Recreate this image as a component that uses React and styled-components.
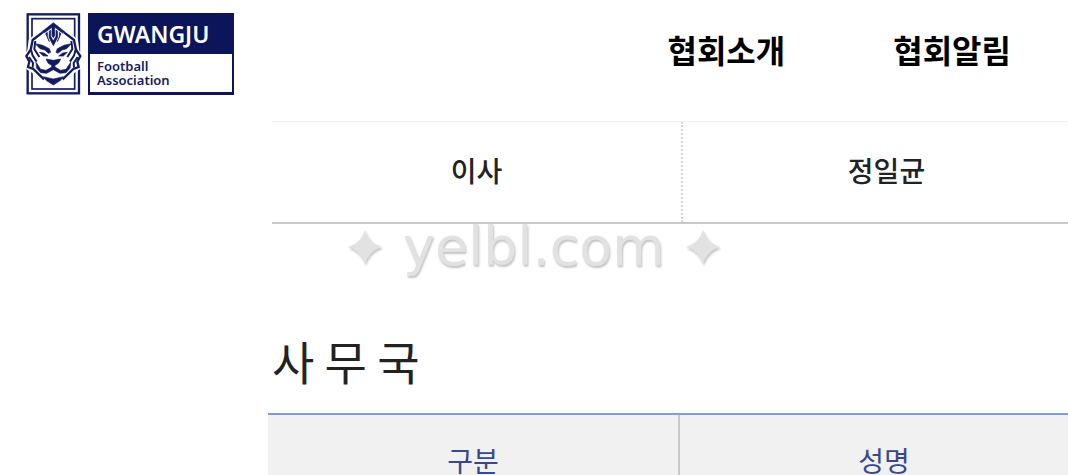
import React from 'react';
import styled, { createGlobalStyle } from 'styled-components';

const menus = ['협회소개', '협회알림'];

function LionCrest() {
  return (
    <svg width='57' height='82' viewBox='15 24 171 246' aria-hidden='true'>
      <rect x='23' y='28' width='154' height='237' fill='#fff' stroke='#121a62' strokeWidth='7' />
      <rect x='36' y='41' width='128' height='211' fill='none' stroke='#121a62' strokeWidth='5' />
      <path
        d='M100 46 L126 66 L154 86 L174 104 L178 136 L188 154 L184 190 L160 206 L134 226 L100 248 L66 226 L40 206 L16 190 L12 154 L22 136 L26 104 L46 86 L74 66Z'
        fill='#fff'
      />
      <g fill='#121a62' stroke='#121a62' strokeWidth='2'>
        <path d='M100 53 L134 80 L128 84 L104 67 L104 92 L100 98 L96 92 L96 67 L72 84 L66 80Z' />
        <path d='M88 78 L92 76 L92 94 L100 108 L108 94 L108 76 L112 78 L113 97 L100 122 L87 97Z' />
        <path d='M77 86 L82 82 L82 96 L88 110Z M123 86 L118 82 L118 96 L112 110Z' />
        <path d='M46 116 L68 121 L88 131 L92 142 L86 145 L74 135 L60 131Z M154 116 L132 121 L112 131 L108 142 L114 145 L126 135 L140 131Z' />
        <path d='M58 142 L72 144 L84 153 L70 153Z M142 142 L128 144 L116 153 L130 153Z' />
        <path d='M78 162 L100 166 L122 162 L116 174 L104 182 L106 187 L122 196 L138 193 L152 172 L150 190 L138 203 L120 205 L100 194 L80 205 L62 203 L50 190 L48 172 L62 193 L78 196 L94 187 L96 182 L84 174Z' />
        <path d='M70 215 L100 222 L130 215 L122 226 L100 240 L78 226Z' />
      </g>
      <g fill='none' stroke='#121a62' strokeWidth='7'>
        <path d='M68 82 L38 105 L32 134 L19 153 L28 170 L24 186 L40 192 L72 223' />
        <path d='M132 82 L162 105 L168 134 L181 153 L172 170 L176 186 L160 192 L128 223' />
      </g>
      <g fill='none' stroke='#121a62' strokeWidth='6'>
        <path d='M46 108 L43 132 L58 156 M33 134 L38 152 L50 170 M27 156 L39 174 L38 188' />
        <path d='M154 108 L157 132 L142 156 M167 134 L162 152 L150 170 M173 156 L161 174 L162 188' />
      </g>
    </svg>
  );
}

function Star() {
  return (
    <StarIcon viewBox='0 0 36 36' aria-hidden='true'>
      <path d='M18 1 Q22 14 35 18 Q22 22 18 35 Q14 22 1 18 Q14 14 18 1Z' />
    </StarIcon>
  );
}

function App() {
  return (
    <Page>
      <GlobalStyle />
      <Header>
        <Logo href='#home' aria-label='GWANGJU Football Association'>
          <LionCrest />
          <LogoPlate>
            <LogoCity>GWANGJU</LogoCity>
            <LogoName>
              Football
              <br />
              Association
            </LogoName>
          </LogoPlate>
        </Logo>
        <Nav>
          {menus.map((menu) => (
            <NavLink key={menu} href='#menu'>
              {menu}
            </NavLink>
          ))}
        </Nav>
      </Header>

      <main>
        <BoardTable>
          <tbody>
            <tr>
              <BoardCell>이사</BoardCell>
              <BoardCell>정일균</BoardCell>
            </tr>
          </tbody>
        </BoardTable>
        <Title>사 무 국</Title>
        <OfficeTable>
          <thead>
            <tr>
              <OfficeHead scope='col'>구분</OfficeHead>
              <OfficeHead scope='col'>성명</OfficeHead>
            </tr>
          </thead>
        </OfficeTable>
      </main>

      <Watermark>
        <Star />
        <span>yelbl.com</span>
        <Star />
      </Watermark>
    </Page>
  );
}

export default App;

const GlobalStyle = createGlobalStyle`
  * {
    box-sizing: border-box;
  }

  body {
    margin: 0;
    overflow: hidden;
    background-color: #fff;
    color: #222;
    font-family: 'Noto Sans CJK KR', 'Noto Sans', sans-serif;
  }
`;

const Page = styled.div`
  position: relative;
  height: 100vh;
  overflow: hidden;
`;

const Header = styled.header`
  display: flex;
  align-items: flex-start;
  justify-content: space-between;
  height: 121px;
  padding: 13px 57px 0 25px;
`;

const Logo = styled.a`
  display: flex;
  gap: 6px;
  text-decoration: none;
`;

const LogoPlate = styled.span`
  display: flex;
  flex-direction: column;
  width: 146px;
  height: 82px;
  padding: 0 2px 3px;
  background-color: #0d155a;
  font-family: 'Noto Sans', sans-serif;
`;

const LogoCity = styled.span`
  height: 41px;
  padding-left: 7px;
  color: #fff;
  font-size: 23px;
  font-weight: 600;
  line-height: 42px;
`;

const LogoName = styled.span`
  flex: 1;
  padding: 5px 7px 0;
  background-color: #fff;
  color: #121a62;
  font-size: 13px;
  font-weight: 600;
  line-height: 14px;
`;

const Nav = styled.nav`
  display: flex;
  gap: 108px;
  padding-top: 12px;
`;

const NavLink = styled.a`
  color: #000;
  font-size: 32px;
  font-weight: 700;
  line-height: 48px;
  text-decoration: none;
`;

const Table = styled.table`
  table-layout: fixed;
  border-collapse: separate;
  border-spacing: 0;
  font-size: 28px;
`;

const BoardTable = styled(Table)`
  width: calc(100% - 250px);
  margin-left: 272px;
  border-top: 1px solid #f1f1f1;
  border-bottom: 2px solid #c8c8c8;
`;

const BoardCell = styled.td`
  height: 100px;
  padding: 0 0 4px;
  font-weight: 500;
  text-align: center;

  & + & {
    border-left: 2px dotted #d4d4d4;
  }
`;

const Title = styled.h2`
  margin: 104px 0 21px 272px;
  font-size: 46px;
  font-weight: 400;
  line-height: 64px;
`;

const OfficeTable = styled(Table)`
  width: calc(100% - 248px);
  margin-left: 268px;
  border-top: 2px solid #7f9bdb;
  background-color: #f1f1f1;
`;

const OfficeHead = styled.th`
  height: 94px;
  padding: 0 0 4px;
  color: #39488a;
  font-weight: 400;
  text-align: center;

  & + & {
    border-left: 2px solid #c8c8c8;
  }
`;

const Watermark = styled.div`
  position: absolute;
  top: 215px;
  left: 0;
  display: flex;
  align-items: center;
  justify-content: center;
  gap: 20px;
  width: 100%;
  color: #e2e2e2;
  font-family: 'DejaVu Sans', sans-serif;
  font-size: 54px;
  line-height: 64px;
  text-shadow: 1px 2px 2px #c4c4c4;
  pointer-events: none;
`;

const StarIcon = styled.svg`
  width: 36px;
  height: 36px;
  fill: #e2e2e2;
  filter: drop-shadow(1px 2px 1px #c4c4c4);
`;
